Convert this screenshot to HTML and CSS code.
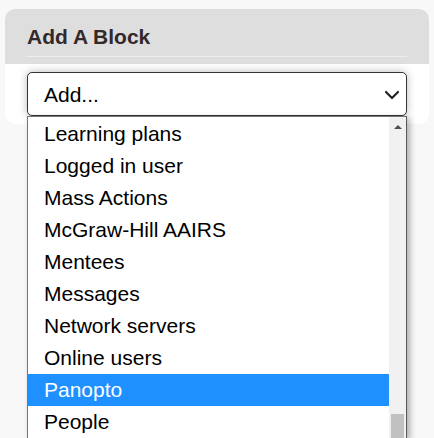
FILE: index.html
```html
<!DOCTYPE html>
<html>
<head>
<meta charset="utf-8">
<link rel="stylesheet" href="styles.css">
</head>
<body>
<div class="card">
  <div class="card-header">
    <h2 class="card-title">Add A Block</h2>
    <div class="divider"></div>
  </div>
  <div class="card-body">
    <div class="select">
      <span class="select-value">Add...</span>
      <svg class="chevron" width="16" height="10" viewBox="0 0 16 10"><polyline points="2,2 8,8 14,2" fill="none" stroke="#222" stroke-width="2.2" stroke-linecap="round" stroke-linejoin="round"/></svg>
    </div>
  </div>
</div>
<div class="dropdown">
  <ul class="options">
    <li class="option">Learning plans</li>
    <li class="option">Logged in user</li>
    <li class="option">Mass Actions</li>
    <li class="option">McGraw-Hill AAIRS</li>
    <li class="option">Mentees</li>
    <li class="option">Messages</li>
    <li class="option">Network servers</li>
    <li class="option">Online users</li>
    <li class="option selected">Panopto</li>
    <li class="option">People</li>
  </ul>
  <div class="scrollbar">
    <div class="arrow-up"></div>
    <div class="thumb"></div>
  </div>
</div>
</body>
</html>
```
FILE: styles.css
```css
html, body {
  margin: 0;
  padding: 0;
  background: #f8f8f8;
  font-family: "Liberation Sans", Arial, sans-serif;
  overflow: hidden;
}
.card {
  margin: 9px 5px 0;
  width: 424px;
  border-radius: 10px;
  overflow: hidden;
  background: #fff;
}
.card-header {
  background: #dedede;
  padding: 16px 22px 7px;
}
.card-title {
  margin: 0;
  font-size: 21px;
  line-height: 24px;
  font-weight: bold;
  color: #33292a;
}
.divider {
  margin-top: 7px;
  height: 1px;
  background: #eeeeee;
}
.card-body {
  padding: 8px 22px 8px;
}
.select {
  height: 42px;
  border: 1px solid #333;
  border-radius: 5px;
  background: #fff;
  display: flex;
  align-items: center;
  justify-content: space-between;
  padding: 0 6px 0 16px;
  box-shadow: 0 0 9px rgba(0,0,0,0.28);
}
.select-value {
  font-size: 21px;
  color: #000;
  padding-top: 1px;
}
.chevron {
  display: block;
  margin-top: 2px;
}
.dropdown {
  position: absolute;
  left: 27px;
  top: 116px;
  width: 378px;
  height: 320px;
  border: 1px solid #767676;
  border-bottom: 0;
  border-right-color: #5a5a5a;
  background: #fff;
  display: flex;
  box-shadow: 3px 2px 6px rgba(0,0,0,0.3);
  padding-top: 1px;
  overflow: hidden;
}
.options {
  list-style: none;
  margin: 0;
  padding: 0;
  flex: 1;
}
.option {
  height: 32px;
  line-height: 32px;
  padding-left: 16px;
  font-size: 21px;
  color: #000;
  white-space: nowrap;
}
.option.selected {
  background: #1e90ff;
  color: #fff;
}
.scrollbar {
  width: 17px;
  background: #f1f1f1;
  position: relative;
  margin-top: -1px;
}
.arrow-up {
  position: absolute;
  left: 5px;
  top: 8px;
  width: 0;
  height: 0;
  border-left: 4px solid transparent;
  border-right: 4px solid transparent;
  border-bottom: 4px solid #505050;
}
.thumb {
  position: absolute;
  left: 2px;
  top: 297px;
  width: 13px;
  height: 24px;
  background: #c1c1c1;
}
```
